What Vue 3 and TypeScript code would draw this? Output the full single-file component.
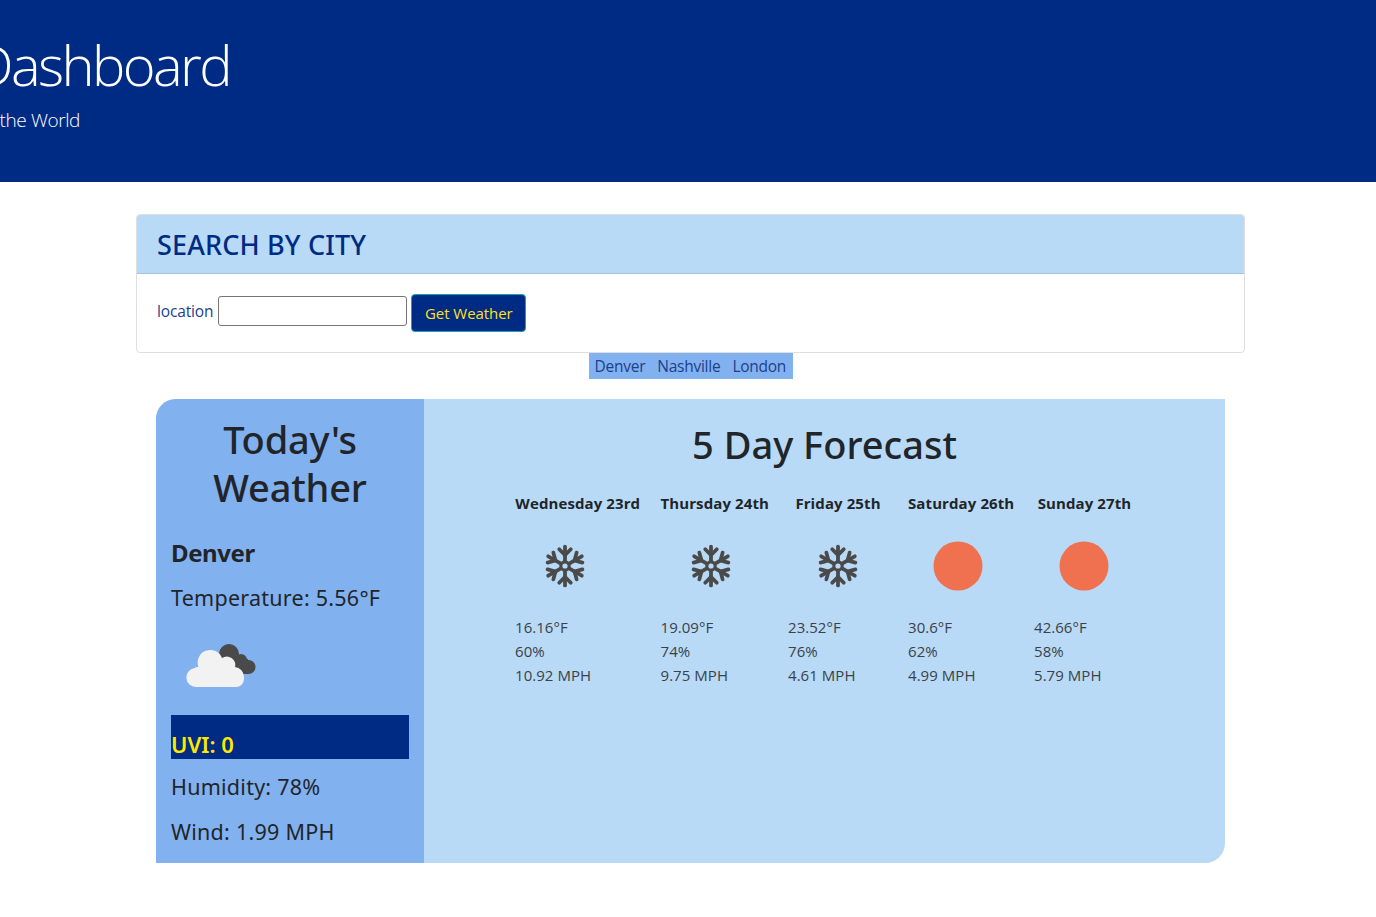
<script setup lang="ts">
interface Day { name: string; temp: string; hum: string; wind: string; icon: 'snow' | 'sun' }
const days: Day[] = [
  { name: 'Wednesday 23rd', temp: '16.16°F', hum: '60%', wind: '10.92 MPH', icon: 'snow' },
  { name: 'Thursday 24th', temp: '19.09°F', hum: '74%', wind: '9.75 MPH', icon: 'snow' },
  { name: 'Friday 25th', temp: '23.52°F', hum: '76%', wind: '4.61 MPH', icon: 'snow' },
  { name: 'Saturday 26th', temp: '30.6°F', hum: '62%', wind: '4.99 MPH', icon: 'sun' },
  { name: 'Sunday 27th', temp: '42.66°F', hum: '58%', wind: '5.79 MPH', icon: 'sun' },
]
const cities = ['Denver', 'Nashville', 'London']
const angles = [0, 60, 120, 180, 240, 300]
</script>

<template>
  <div class="page">
    <header class="hero">
      <div class="hero-text">
        <h1 class="hero-title">Weather Dashboard</h1>
        <p class="hero-sub">Weather Around the World</p>
      </div>
    </header>

    <main class="content">
      <section class="card">
        <h2 class="card-head">SEARCH BY CITY</h2>
        <form class="card-body" @submit.prevent>
          <label class="loc" for="loc">location</label>
          <input id="loc" class="loc-input" type="text" />
          <button class="go" type="button">Get Weather</button>
        </form>
      </section>

      <nav class="cities">
        <span class="cities-in">
          <a v-for="c in cities" :key="c" class="city">{{ c }}</a>
        </span>
      </nav>

      <section class="panel">
        <aside class="today">
          <h1 class="today-title">Today's Weather</h1>
          <h3 class="today-city">Denver</h3>
          <p class="today-line">Temperature: 5.56°F</p>
          <svg class="cloud" viewBox="0 0 72 46" width="72" height="46">
            <g fill="#4a4a4a">
              <circle cx="43" cy="11" r="10" />
              <circle cx="55" cy="17" r="6" />
              <circle cx="62.5" cy="24" r="7" />
              <rect x="40" y="16" width="22" height="15" />
            </g>
            <path fill="#f2f2f2" d="M10 44 a9.500 9.500 0 0 1 -1.500 -18.900 a5 5 0 0 1 4 -1 A12.500 12.500 0 0 1 36 15 a8.500 8.500 0 0 1 13 9 a10 10 0 0 1 9 10 v2 a8 8 0 0 1 -8 8 Z" />
          </svg>
          <div class="uvi"><span>UVI: 0</span></div>
          <p class="today-line">Humidity: 78%</p>
          <p class="today-line">Wind: 1.99 MPH</p>
        </aside>

        <div class="forecast">
          <h2 class="fc-title">5 Day Forecast</h2>
          <div class="fc-grid">
            <div v-for="d in days" :key="d.name" class="fc-day">
              <div class="fc-name">{{ d.name }}</div>
              <div class="fc-icon">
                <svg v-if="d.icon === 'snow'" viewBox="-21 -21 42 42" width="44" height="44">
                  <g stroke="#4a4a4a" fill="none" stroke-linecap="round" stroke-width="3.6">
                    <g v-for="a in angles" :key="a" :transform="`rotate(${a})`">
                      <path d="M0 -5.500 V-18.500" />
                      <path d="M-5.500 -16 L0 -10.500 L5.500 -16" />
                    </g>
                    <circle r="4" stroke-width="3" />
                  </g>
                </svg>
                <svg v-else viewBox="0 0 50 50" width="50" height="50">
                  <circle cx="25" cy="25" r="24.500" fill="#ef714f" />
                </svg>
              </div>
              <div class="fc-line">{{ d.temp }}</div>
              <div class="fc-line">{{ d.hum }}</div>
              <div class="fc-line">{{ d.wind }}</div>
            </div>
          </div>
        </div>
      </section>
    </main>
  </div>
</template>

<style>
html, body { margin: 0; background: #fff; overflow-x: hidden; }
</style>

<style scoped>
.page {
  font-family: "Open Sans", "Noto Sans", sans-serif;
  color: #212529;
  font-size: 16px;
  min-height: 917px;
  overflow: hidden;
}
.hero {
  background: #002b84;
  height: 182px;
  box-sizing: border-box;
  padding-top: 31px;
  color: #fff;
}
.hero-text {
  width: 230px;
  display: flex;
  flex-direction: column;
  align-items: flex-end;
  white-space: nowrap;
}
.hero-title {
  margin: 0;
  font-size: 56px;
  font-weight: 300;
  line-height: 67px;
  letter-spacing: -2.6px;
}
.hero-sub {
  margin: 10px 150px 0 0;
  font-size: 19px;
  font-weight: 300;
  line-height: 24px;
  letter-spacing: -0.4px;
}
.content {
  width: 1109px;
  margin: 32px auto 0;
  position: relative;
  left: 2.500px;
}
.card {
  border: 1px solid #dfdfdf;
  border-radius: 4px;
  overflow: hidden;
}
.card-head {
  margin: 0;
  background: #b8daf7;
  border-bottom: 1px solid #a5c4de;
  color: #002b84;
  font-family: "Noto Sans", sans-serif;
  font-size: 27px;
  font-weight: 500;
  line-height: 60px;
  height: 58px;
  padding: 0 20px;
  letter-spacing: 0.15px;
}
.card-body {
  height: 78px;
  box-sizing: border-box;
  padding: 20px 20px 0;
  display: flex;
  align-items: flex-start;
  color: #002b84;
}
.loc {
  font-size: 15.500px;
  letter-spacing: -0.15px;
  line-height: 24px;
  margin-top: 5px;
  margin-right: 5px;
  color: #1d3f8a;
}
.loc-input {
  width: 189px;
  height: 30px;
  box-sizing: border-box;
  margin-top: 2px;
  margin-right: 4px;
  border: 1px solid #767676;
  border-radius: 3px;
  background: #fff;
  padding: 1px 2px;
}
.go {
  width: 115px;
  height: 38px;
  box-sizing: border-box;
  background: #002b84;
  color: #ffe11e;
  border: 1px solid #17a2b8;
  border-radius: 4px;
  font-family: inherit;
  font-size: 15px;
  letter-spacing: -0.05px;
  padding: 0;
}
.cities {
  display: flex;
  justify-content: center;
  height: 26px;
  margin-bottom: 20px;
}
.cities-in {
  background: #82b1f0;
  display: flex;
  gap: 12px;
  padding: 0 6px;
  width: 204px;
  box-sizing: border-box;
  line-height: 27px;
  font-size: 15.500px;
  letter-spacing: -0.25px;
  color: #1d3f8a;
  white-space: nowrap;
}
.panel {
  width: 1069px;
  height: 464px;
  margin: 0 auto;
  display: flex;
  background: #b8daf7;
  border-radius: 20px 0 20px 0;
  overflow: hidden;
}
.today {
  width: 268px;
  flex: none;
  box-sizing: border-box;
  background: #82b1f0;
  padding: 16px 15px 0;
  font-family: "Noto Sans", sans-serif;
}
.today-title {
  margin: 0 0 27px;
  text-align: center;
  font-size: 38px;
  font-weight: 500;
  line-height: 48px;
  letter-spacing: -0.2px;
}
.today-city {
  margin: 0 0 17px;
  font-size: 24px;
  font-weight: 700;
  line-height: 29px;
  letter-spacing: -0.4px;
}
.today-line {
  margin: 0 0 17px;
  font-size: 21.500px;
  line-height: 28px;
  letter-spacing: 0.25px;
}
.cloud {
  display: block;
  margin: 31px 0 0 15px;
}
.uvi {
  margin: 26px 0 14px;
  height: 44px;
  background: #002b84;
  color: #ffe800;
  font-size: 22px;
  font-weight: 600;
  display: flex;
  align-items: flex-end;
  line-height: 30px;
  letter-spacing: 0;
}
.forecast {
  flex: 1;
  padding-top: 19px;
}
.fc-title {
  margin: 0;
  text-align: center;
  font-family: "Noto Sans", sans-serif;
  font-size: 38px;
  font-weight: 500;
  line-height: 52px;
  letter-spacing: 0;
}
.fc-grid {
  display: grid;
  grid-template-columns: 145.500px 127.500px 120px 126px 121px;
  margin: 21px 0 0 81px;
}
.fc-day {
  padding: 0 10px;
  font-size: 15px;
  letter-spacing: 0.05px;
}
.fc-name {
  font-weight: 700;
  line-height: 24px;
  height: 24px;
  text-align: center;
  white-space: nowrap;
  letter-spacing: 0.1px;
}
.fc-icon {
  width: 100px;
  height: 50px;
  margin: 26px 0 24px;
  display: flex;
  justify-content: center;
  align-items: center;
}
.fc-line {
  line-height: 24px;
  color: #3c4146;
}
</style>
